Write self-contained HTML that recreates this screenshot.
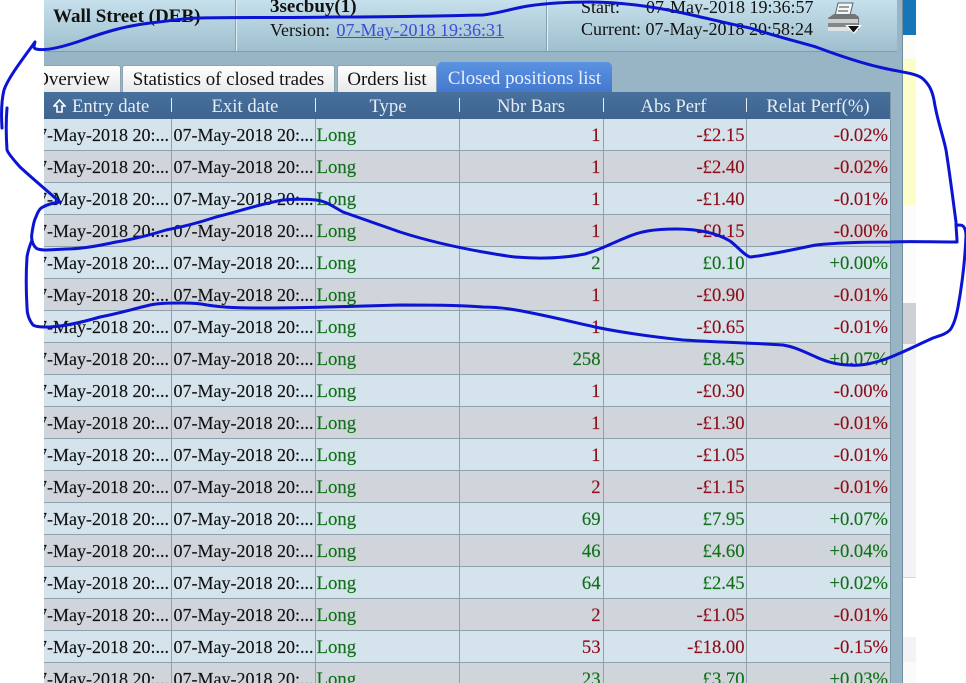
<!DOCTYPE html>
<html><head><meta charset="utf-8"><title>Closed positions list</title>
<style>
html,body{margin:0;padding:0;background:#fff;}
body{width:966px;height:683px;position:relative;overflow:hidden;font-family:"Liberation Serif",serif;font-size:18px;color:#111;}
.a{position:absolute;white-space:nowrap;}
#clip{position:absolute;left:44px;top:0;width:859px;height:683px;overflow:hidden;background:#97b5c4;}
#top{position:absolute;left:0;top:0;width:853px;height:51px;background:linear-gradient(#c6e0ec,#9fbfce);border-bottom:1px solid #7f9dab;}
.vs{position:absolute;top:0;width:1px;height:51px;background:#e2eef3;box-shadow:-1px 0 0 #84a2b1;}
.tab{position:absolute;top:65px;height:26px;background:linear-gradient(#fff,#e9e9e9);border:1px solid #8aa5b3;border-bottom:0;border-radius:3px 3px 0 0;line-height:28px;text-align:center;box-sizing:content-box;font-size:18.9px;}
#act{position:absolute;left:393px;top:62px;width:175px;height:30px;background:linear-gradient(#5b92e0,#4478cf);border-radius:5px 5px 0 0;color:#e8f0fb;text-align:center;line-height:34px;font-size:18.9px;}
#hd{position:absolute;left:0;top:92px;width:846px;height:27px;background:linear-gradient(#47709c,#3f648f);color:#e6edf4;font-size:18.7px;}
#hd span{position:absolute;top:0;line-height:29px;text-align:center;}
#hd i{position:absolute;top:6px;width:1px;height:14px;background:#e6edf4;}
table{position:absolute;left:-17px;top:119px;border-collapse:collapse;table-layout:fixed;width:863px;}
td{height:29px;padding:2px 2px 0;border:solid #8fa1ac;border-width:0 1px 1px 0;box-sizing:content-box;line-height:29px;white-space:nowrap;overflow:hidden;font-size:18px;-webkit-text-stroke:0.15px currentColor;}
tr{background:#d5e3ec;}
tr:nth-child(even){background:#d0d5db;}
td:nth-child(3){color:#0f7018;font-size:18.8px;padding-left:1px;}
td:nth-child(n+4){text-align:right;color:#8e0c18;font-size:18.6px;}
td:nth-child(5){padding-right:1px;}
td:last-child{border-right:0;}
tr.g td:nth-child(n+4){color:#0f7018;}
#ink{position:absolute;left:0;top:0;}
</style></head><body>
<div class="a" style="left:903px;top:0;width:13px;height:35px;background:#1776b8;"></div>
<div class="a" style="left:903px;top:35px;width:13px;height:24px;background:#fdfcf9;"></div>
<div class="a" style="left:903px;top:59px;width:13px;height:146px;background:#fdfdc9;"></div>
<div class="a" style="left:903px;top:205px;width:13px;height:98px;background:#fbfbfb;"></div>
<div class="a" style="left:903px;top:303px;width:13px;height:41px;background:#cdd0d5;"></div>
<div class="a" style="left:903px;top:344px;width:13px;height:233px;background:#f3f3f5;"></div>
<div class="a" style="left:903px;top:577px;width:13px;height:1px;background:#d8d8d8;"></div>
<div class="a" style="left:903px;top:637px;width:13px;height:25px;background:#f3f3f5;"></div>
<div class="a" style="left:903px;top:662px;width:13px;height:21px;background:#fafafa;"></div>

<div id="clip">
<div id="top"></div>
<div class="vs" style="left:192px;"></div>
<div class="vs" style="left:503px;"></div>
<div class="a" style="left:9px;top:6px;font-weight:bold;line-height:22px;font-size:19px;">Wall Street (DEB)</div>
<div class="a" style="left:226px;top:-4px;font-weight:bold;line-height:22px;font-size:19px;">3secbuy(1)</div>
<div class="a" style="left:226px;top:19px;line-height:22px;">Version: <span style="color:#3a4fd6;text-decoration:underline;margin-left:2px;">07-May-2018 19:36:31</span></div>
<div class="a" style="left:537px;top:-4px;line-height:22px;">Start:</div>
<div class="a" style="left:602px;top:-4px;line-height:22px;">07-May-2018 19:36:57</div>
<div class="a" style="left:537px;top:18px;line-height:22px;">Current: 07-May-2018 20:58:24</div>
<svg class="a" style="left:782px;top:2px;" width="36" height="32" viewBox="0 0 36 32">
<path d="M12 1L27 1L24 13L9 14Z" fill="#f4f6f6" stroke="#5c6468" stroke-width="1"/>
<path d="M13 5H23M12 9H22" stroke="#666" stroke-width="1.2"/>
<path d="M2 16L8 12H29L33 15V28H2Z" fill="#6f7578"/>
<path d="M2 17H32V21H2Z" fill="#c9cdcd"/>
<path d="M2 21H32V27H2Z" fill="#83898b"/>
<path d="M2 25H24V29H2Z" fill="#dfe2e2"/>
<path d="M19 23H36L28 32Z" fill="#fff"/>
<path d="M22 24H33L27.5 30.5Z" fill="#111"/>
</svg>
<div class="tab" style="left:-30px;width:105px;"><span style="position:relative;left:5px;">Overview</span></div>
<div class="tab" style="left:78px;width:211px;">Statistics of closed trades</div>
<div class="tab" style="left:293px;width:98px;">Orders list</div>
<div id="act">Closed positions list</div>
<div id="hd">
<svg class="a" style="left:9px;top:7px;" width="13" height="15" viewBox="0 0 13 15"><path d="M6.5 1L12 7H9V13H4V7H1Z" fill="none" stroke="#fff" stroke-width="1.6"/></svg>
<span style="left:28px;">Entry date</span><i style="left:127px;"></i>
<span style="left:129px;width:144px;">Exit date</span><i style="left:271px;"></i>
<span style="left:272px;width:144px;">Type</span><i style="left:415px;"></i>
<span style="left:415px;width:144px;">Nbr Bars</span><i style="left:559px;"></i>
<span style="left:558px;width:143px;">Abs Perf</span><i style="left:702px;"></i>
<span style="left:702px;width:144px;">Relat Perf(%)</span>
</div>
<table>
<colgroup><col style="width:144px"><col style="width:144px"><col style="width:144px"><col style="width:144px"><col style="width:143px"><col style="width:144px"></colgroup>
<tbody>
<tr><td>07-May-2018 20:...</td><td>07-May-2018 20:...</td><td>Long</td><td>1</td><td>-£2.15</td><td>-0.02%</td></tr>
<tr><td>07-May-2018 20:...</td><td>07-May-2018 20:...</td><td>Long</td><td>1</td><td>-£2.40</td><td>-0.02%</td></tr>
<tr><td>07-May-2018 20:...</td><td>07-May-2018 20:...</td><td>Long</td><td>1</td><td>-£1.40</td><td>-0.01%</td></tr>
<tr><td>07-May-2018 20:...</td><td>07-May-2018 20:...</td><td>Long</td><td>1</td><td>-£0.15</td><td>-0.00%</td></tr>
<tr class="g"><td>07-May-2018 20:...</td><td>07-May-2018 20:...</td><td>Long</td><td>2</td><td>£0.10</td><td>+0.00%</td></tr>
<tr><td>07-May-2018 20:...</td><td>07-May-2018 20:...</td><td>Long</td><td>1</td><td>-£0.90</td><td>-0.01%</td></tr>
<tr><td>07-May-2018 20:...</td><td>07-May-2018 20:...</td><td>Long</td><td>1</td><td>-£0.65</td><td>-0.01%</td></tr>
<tr class="g"><td>07-May-2018 20:...</td><td>07-May-2018 20:...</td><td>Long</td><td>258</td><td>£8.45</td><td>+0.07%</td></tr>
<tr><td>07-May-2018 20:...</td><td>07-May-2018 20:...</td><td>Long</td><td>1</td><td>-£0.30</td><td>-0.00%</td></tr>
<tr><td>07-May-2018 20:...</td><td>07-May-2018 20:...</td><td>Long</td><td>1</td><td>-£1.30</td><td>-0.01%</td></tr>
<tr><td>07-May-2018 20:...</td><td>07-May-2018 20:...</td><td>Long</td><td>1</td><td>-£1.05</td><td>-0.01%</td></tr>
<tr><td>07-May-2018 20:...</td><td>07-May-2018 20:...</td><td>Long</td><td>2</td><td>-£1.15</td><td>-0.01%</td></tr>
<tr class="g"><td>07-May-2018 20:...</td><td>07-May-2018 20:...</td><td>Long</td><td>69</td><td>£7.95</td><td>+0.07%</td></tr>
<tr class="g"><td>07-May-2018 20:...</td><td>07-May-2018 20:...</td><td>Long</td><td>46</td><td>£4.60</td><td>+0.04%</td></tr>
<tr class="g"><td>07-May-2018 20:...</td><td>07-May-2018 20:...</td><td>Long</td><td>64</td><td>£2.45</td><td>+0.02%</td></tr>
<tr><td>07-May-2018 20:...</td><td>07-May-2018 20:...</td><td>Long</td><td>2</td><td>-£1.05</td><td>-0.01%</td></tr>
<tr><td>07-May-2018 20:...</td><td>07-May-2018 20:...</td><td>Long</td><td>53</td><td>-£18.00</td><td>-0.15%</td></tr>
<tr class="g"><td>07-May-2018 20:...</td><td>07-May-2018 20:...</td><td>Long</td><td>23</td><td>£3.70</td><td>+0.03%</td></tr>
</tbody></table>
</div>
<div class="a" style="left:890px;top:92px;width:1px;height:591px;background:#7d98a8;"></div>
<div class="a" style="left:902px;top:0;width:1px;height:683px;background:#6f8d9b;"></div>
<svg id="ink" width="966" height="683" viewBox="0 0 966 683" fill="none" stroke="#0a14d2" stroke-width="3" stroke-linecap="round" stroke-linejoin="round">
<path d="M2 128C1 112 2 98 4 90C8 78 22 60 35 42C34 46 33 48 36 49C44 51 60 48 83 40C105 32 125 26 150 23C170 21 185 18 200 18C250 17 290 18 333 17C390 17 440 16 483 15C500 13 510 9 528 6C548 3 570 2 590 2C620 2 650 6 683 13C710 19 730 24 750 28C775 36 795 41 816 47C840 56 865 64 883 68C900 72 915 73 922 78C929 84 932 90 934 100C937 120 943 135 946 150C950 175 953 200 956 222C956 230 957 236 957 242C930 242 910 241 890 242C860 242 835 243 816 245C795 249 770 255 750 257C744 255 738 247 730 241C715 232 695 229 676 229C655 229 640 231 625 238C610 244 600 250 585 254C565 258 540 259 515 257C505 256 495 254 483 252C455 247 425 240 400 232C380 225 360 218 343 212C332 206 326 201 316 200C305 199 295 199 283 200C260 204 240 211 216 217C198 223 182 227 166 230C150 235 135 239 116 242C98 246 82 249 66 249C50 250 40 251 36 248C32 244 31 238 32 233C33 226 34 220 36 217C38 211 40 208 43 207C48 204 54 203 60 202C46 190 32 178 20 167C14 160 9 155 7 150C6 135 6 120 7 108"/>
<path d="M956 225C960 225 962 225 963 226C965 228 966 231 966 236C965 260 962 285 958 307C956 318 953 326 950 330C945 335 938 336 933 338C915 346 900 354 883 360C870 364 860 366 850 365C838 365 827 362 816 357C805 352 795 347 783 345C750 343 715 342 683 340C655 337 625 333 600 328C572 322 545 315 516 310C505 308 495 307 483 307C455 305 430 305 400 305C360 306 310 308 267 308C245 308 225 308 207 305C198 303 190 303 183 303C170 303 160 303 150 305C133 309 117 314 100 317C83 322 66 326 50 327C42 327 36 327 33 325C29 320 27 314 27 307C26 290 26 272 27 257C28 250 30 245 32 240"/>
</svg>
</body></html>
